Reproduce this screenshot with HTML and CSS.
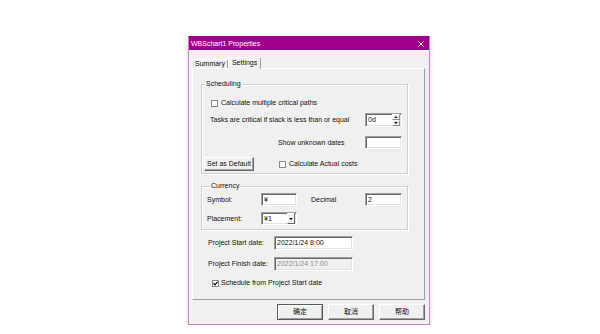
FILE: index.html
```html
<!DOCTYPE html>
<html lang="en">
<head>
<meta charset="UTF-8" />
<title>WBSchart1 Properties</title>
<link rel="stylesheet" href="styles.css">
</head>
<body>
  <div class="dialog">
    <div class="titlebar">
      <span>WBSchart1 Properties</span>
      <svg class="close" viewBox="0 0 6 6" width="6" height="6"><path d="M0.5 0.5 L5.5 5.5 M5.5 0.5 L0.5 5.5" stroke="#fff" stroke-width="1" fill="none"/></svg>
    </div>

    <div class="tabs">
      <div class="tab">Summary</div>
      <div class="tab active">Settings</div>
    </div>

    <div class="panel">
      <fieldset class="group sched">
        <legend>Scheduling</legend>
        <div class="row r1"><span class="check"></span>Calculate multiple critical paths</div>
        <div class="row r2">
          <span>Tasks are critical if slack is less than or equal</span>
          <div class="field spin">
            <span>0d</span>
            <span class="spin-btns">
              <span class="sb"><span class="arrow up"></span></span>
              <span class="sb"><span class="arrow down"></span></span>
            </span>
          </div>
        </div>
        <div class="row r3">
          <span>Show unknown dates</span>
          <div class="field w37"></div>
        </div>
        <div class="row r4">
          <div class="btn small">Set as Default</div>
          <span class="check gap"></span>Calculate Actual costs
        </div>
      </fieldset>

      <fieldset class="group currency">
        <legend>Currency</legend>
        <div class="row crow">
          <span class="lbl">Symbol:</span>
          <div class="field w36">¥</div>
          <span class="lbl lbl2">Decimal</span>
          <div class="field w37">2</div>
        </div>
        <div class="row crow second">
          <span class="lbl">Placement:</span>
          <div class="field select w36">
            <span>¥1</span>
            <span class="dd"><span class="arrow down"></span></span>
          </div>
        </div>
      </fieldset>

      <div class="row prow">
        <span class="lbl">Project Start date:</span>
        <div class="field date">2022/1/24 8:00</div>
      </div>
      <div class="row prow finish">
        <span class="lbl">Project Finish date:</span>
        <div class="field date disabled">2022/1/24 17:00</div>
      </div>
      <div class="row crow-check">
        <span class="check checked">
          <svg viewBox="0 0 5 5" width="5" height="5"><path d="M0.5 2.2 L2 3.8 L4.6 0.8" stroke="#000" stroke-width="1.2" fill="none"/></svg>
        </span>Schedule from Project Start date
      </div>
    </div>

    <div class="actions">
      <div class="btn default">确定</div>
      <div class="btn">取消</div>
      <div class="btn">帮助</div>
    </div>
  </div>
</body>
</html>
```

FILE: styles.css
```css
* {
  box-sizing: border-box;
}

body {
  margin: 0;
  background-color: #fff;
  color: #111;
  font-family: "Liberation Sans", "Noto Sans CJK SC", sans-serif;
  font-size: 7px;
  line-height: 8px;
}

/* Fenetre */
.dialog {
  width: 242px;
  height: 289px;
  margin: 36px 0 0 188px;
  border: 1px solid #c987c3;
  border-top-color: #a1008d;
  background-color: #f0f0f0;
  display: flex;
  flex-direction: column;
  box-shadow: 0 1px 4px rgba(0, 0, 0, 0.18);
}

.titlebar {
  flex: none;
  height: 13px;
  padding: 1px 5px 0 2px;
  background-color: #a1008d;
  color: #fff;
  display: flex;
  align-items: center;
  justify-content: space-between;
}

/* Onglets */
.tabs {
  flex: none;
  height: 11px;
  margin: 7px 0 0 3px;
  display: flex;
  align-items: flex-end;
}
.tab {
  height: 9px;
  padding: 0 2px;
  border: 1px solid;
  border-bottom: 0;
  border-color: #fff #a0a0a0 transparent #fff;
  display: flex;
  align-items: center;
}
.tab.active {
  height: 12px;
  margin-bottom: -1px;
  padding: 0 3px 2px;
  background-color: #f0f0f0;
  position: relative;
  z-index: 1;
}

.panel {
  flex: none;
  height: 232px;
  margin: 0 4px 0 3px;
  border: 1px solid;
  border-color: #fff #a0a0a0 #a0a0a0 #fff;
  display: flex;
  flex-direction: column;
  align-items: flex-start;
}

/* Groupes */
.group {
  width: 207px;
  min-width: 0;
  margin: 11px 0 0 8px;
  padding: 0;
  border: 1px solid #d0d0d0;
  box-shadow: inset 1px 1px #fff, 1px 1px #fff;
}
.group legend {
  margin-left: 3px;
  padding: 0 1px;
  background-color: #f0f0f0;
  line-height: 8px;
}

.row {
  display: flex;
  align-items: center;
  white-space: nowrap;
}

.sched {
  padding: 10px 5px 2px 0;
}
.sched .r1 {
  height: 10px;
  padding-left: 9px;
}
.sched .r2 {
  height: 14px;
  margin-top: 5px;
  padding-left: 8px;
}
.sched .r3 {
  height: 13px;
  margin-top: 9px;
  padding-left: 76px;
}
.sched .r4 {
  height: 14px;
  margin-top: 8px;
  padding-left: 2px;
}
.r2 .field,
.r3 .field {
  margin-left: auto;
}

.currency {
  margin-top: 8px;
  padding: 3px 0 4px 5px;
}
.crow {
  height: 13px;
}
.crow.second {
  margin-top: 6px;
}
.lbl {
  width: 54px;
  flex: none;
}
.lbl2 {
  margin-left: 14px;
}

.prow {
  height: 14px;
  margin-top: 6px;
  padding-left: 15px;
}
.prow.finish {
  margin-top: 7px;
}
.prow .lbl {
  width: 66px;
}
.crow-check {
  height: 8px;
  margin: 8px 0 0 19px;
}

/* Cases a cocher */
.check {
  flex: none;
  width: 7px;
  height: 7px;
  margin-right: 3px;
  border: 1px solid #8a8a8a;
  background-color: #fff;
  display: flex;
  align-items: center;
  justify-content: center;
}
.check.gap {
  margin-left: 25px;
}
.check.checked {
  margin-right: 2px;
}

/* Champs */
.field {
  flex: none;
  height: 13px;
  padding: 0 2px;
  border: 1px solid;
  border-color: #a0a0a0 #fff #fff #a0a0a0;
  box-shadow: inset 1px 1px #696969, inset -1px -1px #e3e3e3;
  background-color: #fff;
  display: flex;
  align-items: center;
}
.w36 {
  width: 36px;
}
.w37 {
  width: 37px;
}
.date {
  width: 79px;
  height: 14px;
}
.field.disabled {
  background-color: #f0f0f0;
  color: #8d8d8d;
}

.spin {
  width: 37px;
  height: 14px;
  padding-right: 1px;
}
.spin-btns {
  width: 8px;
  height: 12px;
  margin-left: auto;
  display: flex;
  flex-direction: column;
}
.sb {
  flex: 1;
  border: 1px solid;
  border-color: #fff #8a8a8a #8a8a8a #fff;
  background-color: #f0f0f0;
  display: flex;
  align-items: center;
  justify-content: center;
}

.select {
  padding-right: 1px;
}
.dd {
  width: 8px;
  height: 11px;
  margin-left: auto;
  border: 1px solid;
  border-color: #fff #696969 #696969 #fff;
  background-color: #f0f0f0;
  display: flex;
  align-items: center;
  justify-content: center;
}

.arrow {
  width: 0;
  height: 0;
  border-left: 2px solid transparent;
  border-right: 2px solid transparent;
}
.arrow.up {
  border-bottom: 2px solid #333;
}
.arrow.down {
  border-top: 2px solid #111;
}

/* Boutons */
.btn {
  flex: none;
  width: 46px;
  height: 16px;
  border: 1px solid;
  border-color: #fff #696969 #696969 #fff;
  box-shadow: inset -1px -1px #a0a0a0;
  background-color: #f0f0f0;
  display: flex;
  align-items: center;
  justify-content: center;
}
.btn.small {
  width: 50px;
  height: 14px;
}
.btn.default {
  border-color: #5a5a5a;
  box-shadow: inset 1px 1px #fff, inset -1px -1px #a0a0a0;
}

.actions {
  flex: none;
  margin-top: 4px;
  padding-right: 4px;
  display: flex;
  justify-content: flex-end;
  gap: 5px;
}
```
